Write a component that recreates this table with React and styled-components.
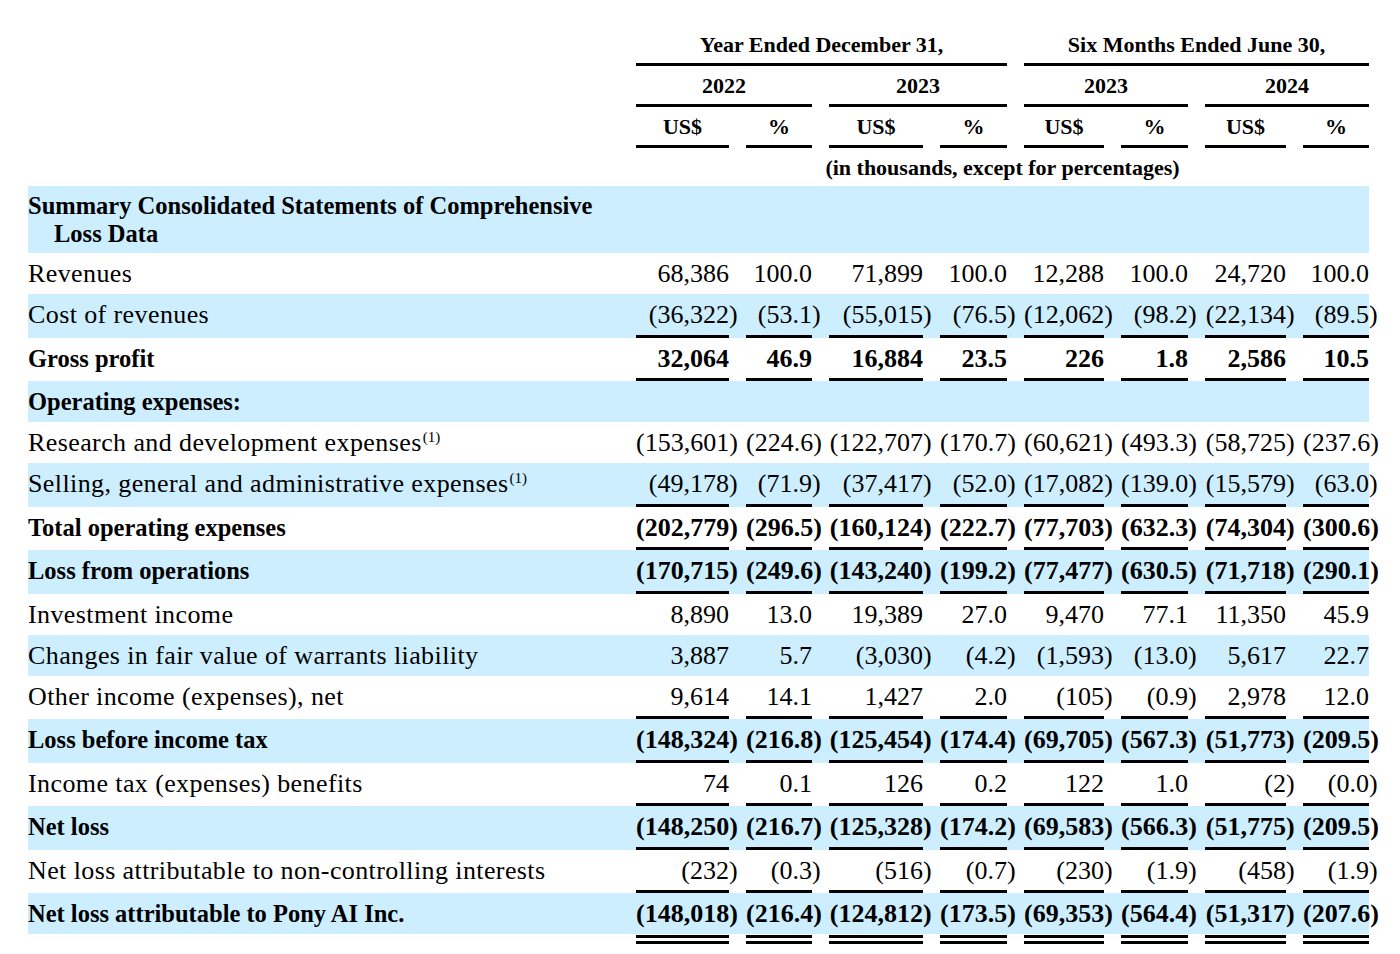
import React from "react";
import styled, { createGlobalStyle } from "styled-components";

const GlobalStyle = createGlobalStyle`
body {
  margin: 0;
  background: #fff;
  color: #000;
  font-family: "Liberation Serif", "Times New Roman", serif;
}
`;

const years = [
  { label: "Year Ended December 31,", col: 2 },
  { label: "Six Months Ended June 30,", col: 6 },
];

const periods = [
  { label: "2022", col: 2 },
  { label: "2023", col: 4 },
  { label: "2023", col: 6 },
  { label: "2024", col: 8 },
];

const rows = [
  { label: "Revenues", values: ["68,386", "100.0", "71,899", "100.0", "12,288", "100.0", "24,720", "100.0"] },
  { label: "Cost of revenues", rule: true, values: ["(36,322)", "(53.1)", "(55,015)", "(76.5)", "(12,062)", "(98.2)", "(22,134)", "(89.5)"] },
  { label: "Gross profit", bold: true, rule: true, values: ["32,064", "46.9", "16,884", "23.5", "226", "1.8", "2,586", "10.5"] },
  { label: "Operating expenses:", bold: true, values: null },
  { label: "Research and development expenses", note: true, values: ["(153,601)", "(224.6)", "(122,707)", "(170.7)", "(60,621)", "(493.3)", "(58,725)", "(237.6)"] },
  { label: "Selling, general and administrative expenses", note: true, rule: true, values: ["(49,178)", "(71.9)", "(37,417)", "(52.0)", "(17,082)", "(139.0)", "(15,579)", "(63.0)"] },
  { label: "Total operating expenses", bold: true, rule: true, values: ["(202,779)", "(296.5)", "(160,124)", "(222.7)", "(77,703)", "(632.3)", "(74,304)", "(300.6)"] },
  { label: "Loss from operations", bold: true, rule: true, values: ["(170,715)", "(249.6)", "(143,240)", "(199.2)", "(77,477)", "(630.5)", "(71,718)", "(290.1)"] },
  { label: "Investment income", values: ["8,890", "13.0", "19,389", "27.0", "9,470", "77.1", "11,350", "45.9"] },
  { label: "Changes in fair value of warrants liability", values: ["3,887", "5.7", "(3,030)", "(4.2)", "(1,593)", "(13.0)", "5,617", "22.7"] },
  { label: "Other income (expenses), net", rule: true, values: ["9,614", "14.1", "1,427", "2.0", "(105)", "(0.9)", "2,978", "12.0"] },
  { label: "Loss before income tax", bold: true, rule: true, values: ["(148,324)", "(216.8)", "(125,454)", "(174.4)", "(69,705)", "(567.3)", "(51,773)", "(209.5)"] },
  { label: "Income tax (expenses) benefits", rule: true, values: ["74", "0.1", "126", "0.2", "122", "1.0", "(2)", "(0.0)"] },
  { label: "Net loss", bold: true, rule: true, values: ["(148,250)", "(216.7)", "(125,328)", "(174.2)", "(69,583)", "(566.3)", "(51,775)", "(209.5)"] },
  { label: "Net loss attributable to non-controlling interests", rule: true, values: ["(232)", "(0.3)", "(516)", "(0.7)", "(230)", "(1.9)", "(458)", "(1.9)"] },
  { label: "Net loss attributable to Pony AI Inc.", bold: true, values: ["(148,018)", "(216.4)", "(124,812)", "(173.5)", "(69,353)", "(564.4)", "(51,317)", "(207.6)"] },
];

// closing paren hangs out past the column edge, like the filing does
function Amount({ text }) {
  if (text.endsWith(")")) {
    return (
      <>
        {text.slice(0, -1)}
        <Close>)</Close>
      </>
    );
  }
  return text;
}

function App() {
  return (
    <Page>
      <GlobalStyle />
      <Grid>
        {years.map((y) => (
          <HeadCell key={y.label} $col={y.col} $span={4} $rule>
            {y.label}
          </HeadCell>
        ))}
      </Grid>
      <Grid>
        {periods.map((p, i) => (
          <HeadCell key={i} $col={p.col} $span={2} $rule>
            {p.label}
          </HeadCell>
        ))}
      </Grid>
      <Grid>
        {[2, 3, 4, 5, 6, 7, 8, 9].map((c) => (
          <HeadCell key={c} $col={c} $span={1} $rule>
            {c % 2 === 0 ? "US$" : "%"}
          </HeadCell>
        ))}
      </Grid>
      <Grid>
        <HeadCell $col={2} $span={8}>
          (in thousands, except for percentages)
        </HeadCell>
      </Grid>

      <Grid $shade>
        <SectionTitle>Summary Consolidated Statements of Comprehensive Loss Data</SectionTitle>
      </Grid>

      {rows.map((r, i) => (
        <Grid key={r.label} $shade={i % 2 === 1}>
          <Label $bold={r.bold}>
            {r.label}
            {r.note && <Note>(1)</Note>}
          </Label>
          {r.values &&
            r.values.map((v, j) => (
              <Value key={j} $bold={r.bold} $rule={r.rule}>
                <Amount text={v} />
              </Value>
            ))}
        </Grid>
      ))}

      <Grid>
        {[2, 3, 4, 5, 6, 7, 8, 9].map((c) => (
          <DoubleRule key={c} $col={c} />
        ))}
      </Grid>
    </Page>
  );
}

export default App;

const Page = styled.div`
padding: 25px 0 20px 28px;
width: 1341px;
`;

const Grid = styled.div`
display: grid;
grid-template-columns: 591px 93px 66px 94px 67px 80px 67px 81px 66px;
column-gap: 17px;
background: ${(p) => (p.$shade ? "#cceeff" : "transparent")};
`;

const HeadCell = styled.div`
grid-column: ${(p) => p.$col} / span ${(p) => p.$span};
text-align: center;
font-weight: bold;
font-size: 22px;
line-height: 26px;
padding: 7px 0 5px;
border-bottom: ${(p) => (p.$rule ? "3px solid #000" : "none")};
white-space: nowrap;
`;

const SectionTitle = styled.div`
grid-column: 1 / span 1;
font-weight: bold;
font-size: 24.5px;
line-height: 28px;
padding: 6px 10px 5px 26px;
text-indent: -26px;
`;

const Label = styled.div`
grid-column: 1;
font-size: ${(p) => (p.$bold ? "24.5px" : "26px")};
font-weight: ${(p) => (p.$bold ? "bold" : "normal")};
letter-spacing: ${(p) => (p.$bold ? "0" : "0.4px")};
line-height: 28px;
padding: 7px 0 6px;
white-space: nowrap;
`;

const Note = styled.sup`
font-size: 15px;
line-height: 0;
vertical-align: 9px;
letter-spacing: 0;
margin-left: 1px;
`;

const Value = styled.div`
text-align: right;
font-size: 26px;
font-weight: ${(p) => (p.$bold ? "bold" : "normal")};
line-height: 28px;
padding: 7px 0 ${(p) => (p.$rule ? "5.5px" : "6px")};
border-bottom: ${(p) => (p.$rule ? "3px solid #000" : "none")};
white-space: nowrap;
`;

const Close = styled.span`
margin-right: -0.333em;
`;

const DoubleRule = styled.div`
grid-column: ${(p) => p.$col};
height: 0;
border-bottom: 9px double #000;
margin-top: 1px;
`;
